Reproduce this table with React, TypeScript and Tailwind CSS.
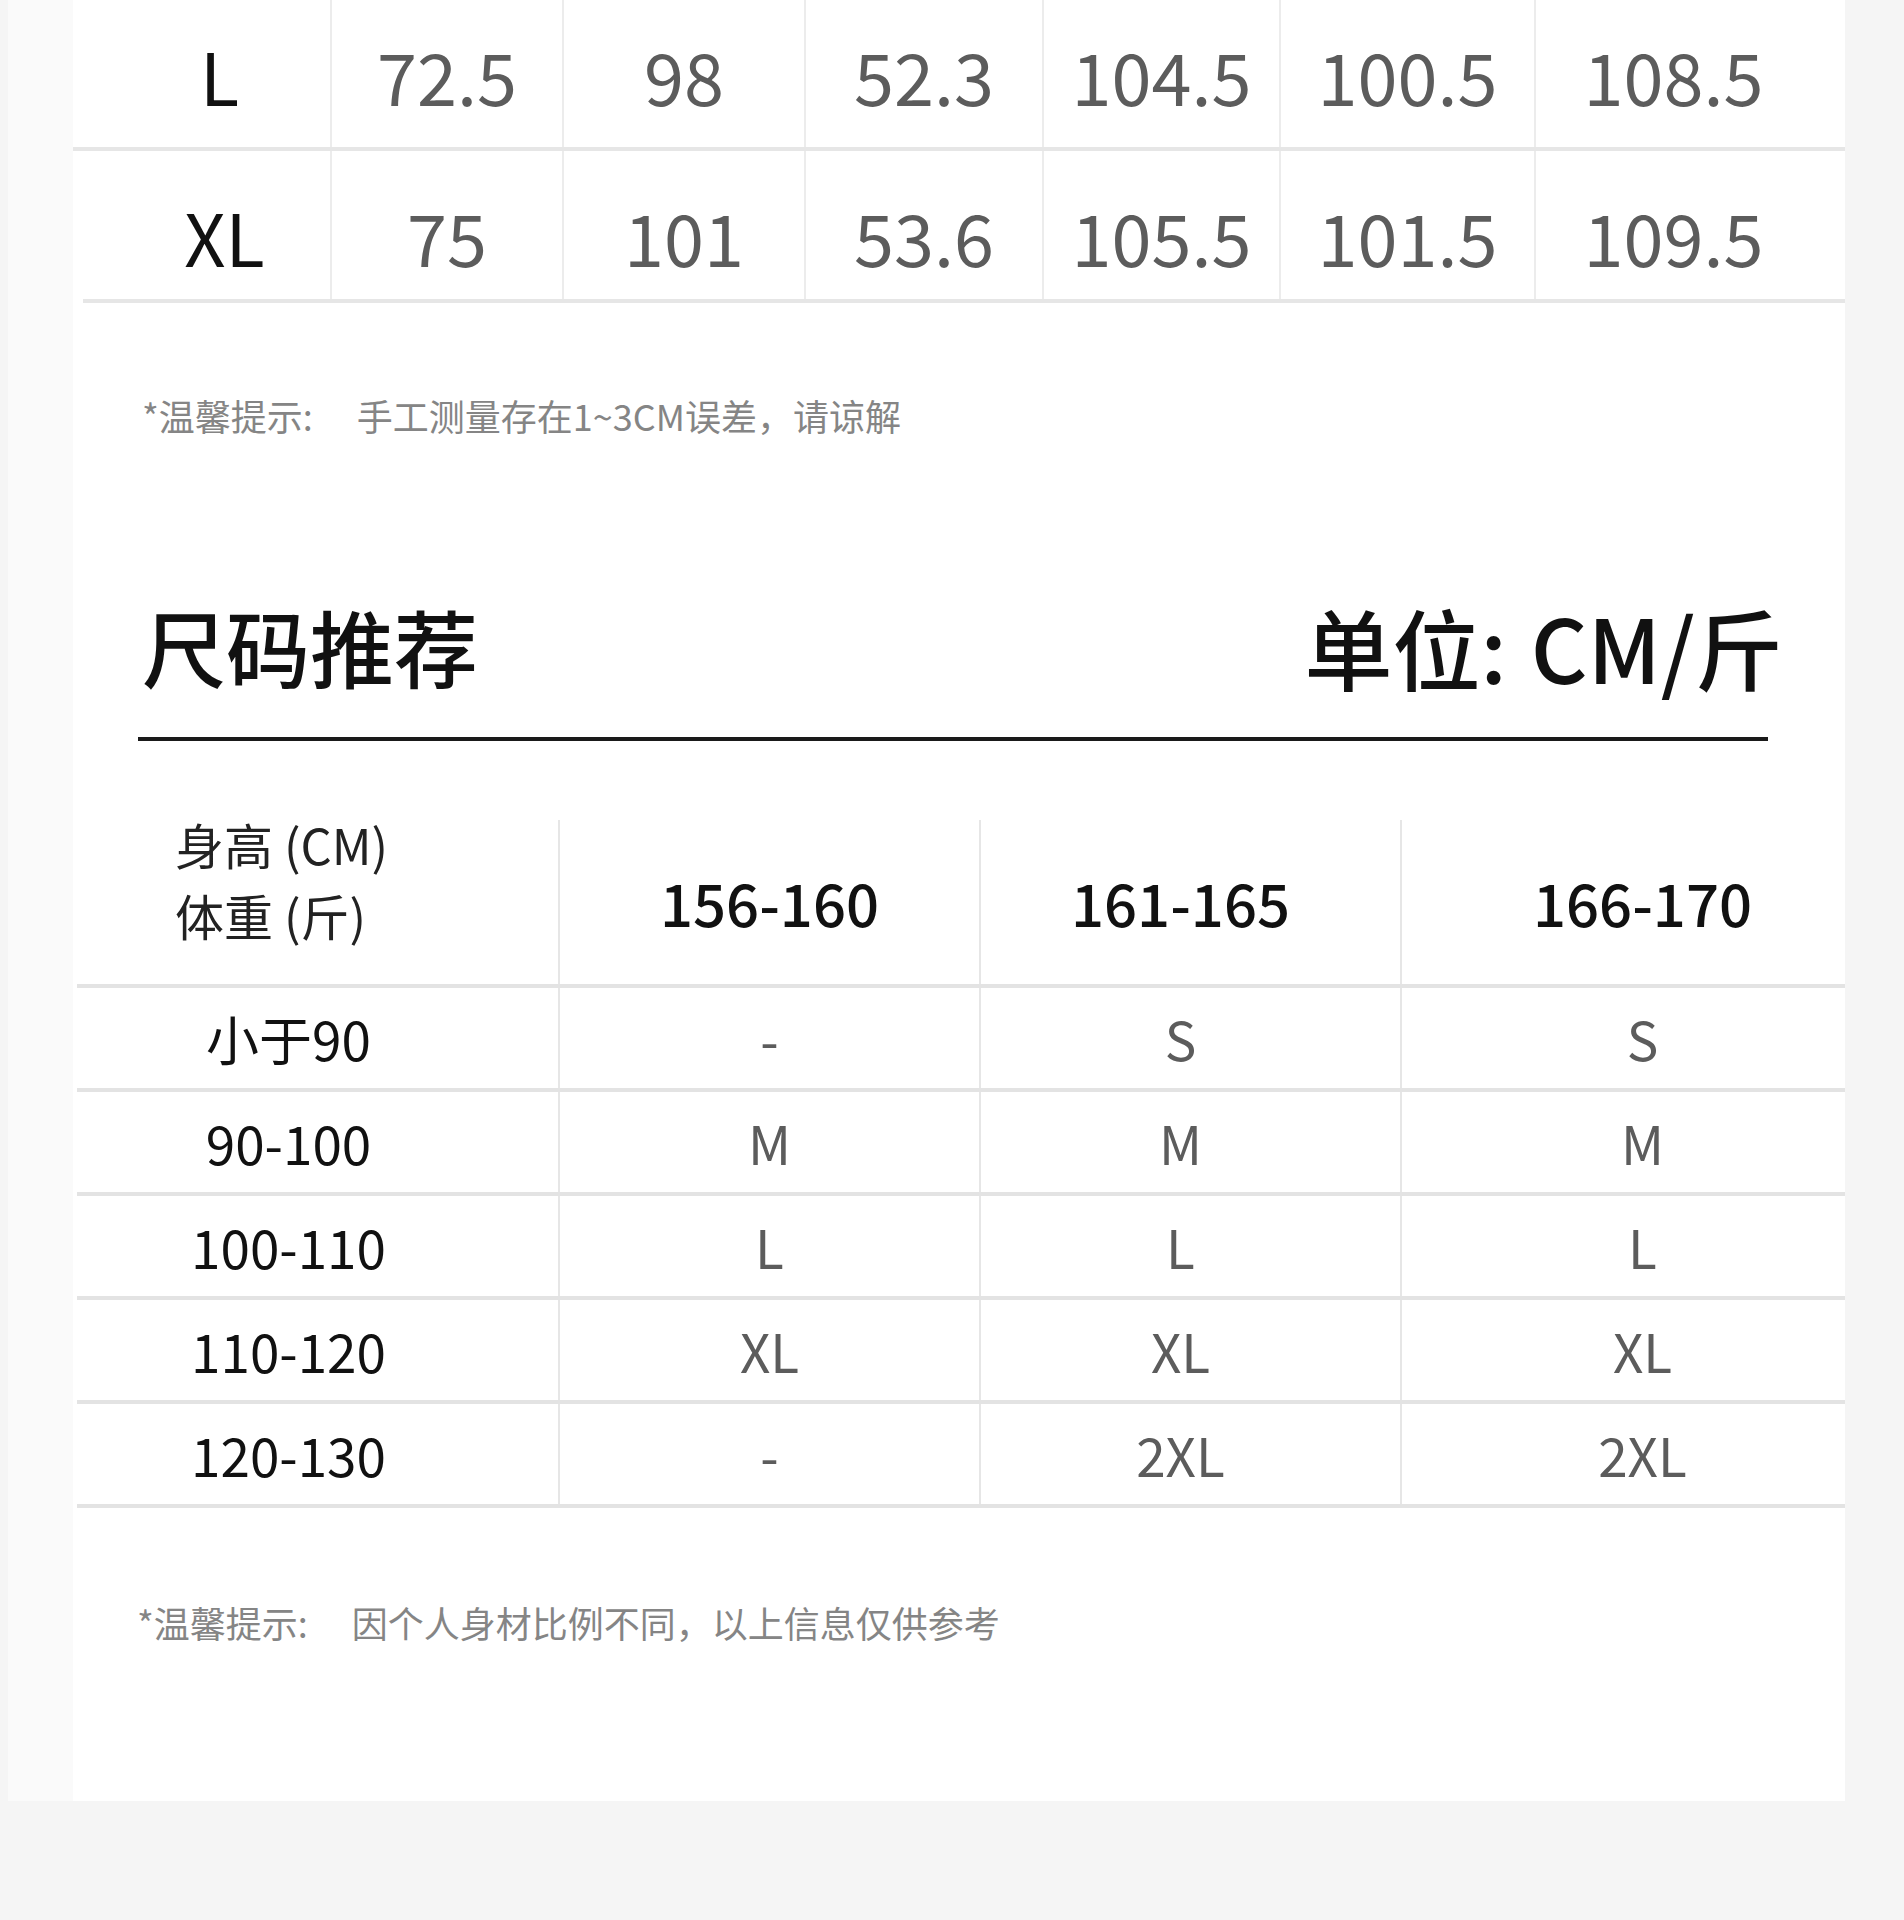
import React from "react";

const topWidths = ["w-[259px]", "w-[232px]", "w-[242px]", "w-[238px]", "w-[237px]", "w-[255px]", "w-[309px]"];

const topRows = [
  { size: "L", values: ["72.5", "98", "52.3", "104.5", "100.5", "108.5"], h: "h-[151px]", pt: "pt-[2px]" },
  { size: "XL", values: ["75", "101", "53.6", "105.5", "101.5", "109.5"], h: "h-[152px]", pt: "pt-[22px]" },
];

const recRows = [
  { weight: "小于90", sizes: ["-", "S", "S"] },
  { weight: "90-100", sizes: ["M", "M", "M"] },
  { weight: "100-110", sizes: ["L", "L", "L"] },
  { weight: "110-120", sizes: ["XL", "XL", "XL"] },
  { weight: "120-130", sizes: ["-", "2XL", "2XL"] },
];

const Tip = ({ text }: { text: string }) => (
  <p className="text-[36px] leading-[44px] text-[#858585] whitespace-nowrap">
    <span>*温馨提示:</span>
    <span className="ml-[44px]">{text}</span>
  </p>
);

const App = () => {
  return (
    <div className="min-h-[1920px] w-[1904px] bg-[#f5f5f5] pl-[8px] font-['Noto_Sans_CJK_SC',sans-serif]">
      <div className="w-[1837px] bg-[#fafafa] pl-[65px]">
        <div className="w-[1772px] h-[1801px] bg-white overflow-hidden">
          {/* 尺码表 (上半部分) */}
          <div>
            {topRows.map((row, i) => (
              <div
                key={row.size}
                className={`flex ${row.h} border-b-4 border-[#e6e6e6] ${i === 1 ? "ml-[10px]" : ""}`}
              >
                {[row.size, ...row.values].map((v, j) => (
                  <div
                    key={j}
                    className={`${j === 0 && i === 1 ? "w-[249px]" : topWidths[j]} ${row.pt} flex items-center justify-center text-[72px] leading-none ${
                      j < 6 ? "border-r-2 border-[#ececec]" : ""
                    } ${j === 0 ? "text-[#111] pl-[36px]" : "text-[#5c5c5c]"} ${j === 6 ? "pr-[34px]" : ""}`}
                  >
                    {v}
                  </div>
                ))}
              </div>
            ))}
          </div>

          <div className="mt-[90px] pl-[69px]">
            <Tip text="手工测量存在1~3CM误差，请谅解" />
          </div>

          {/* 尺码推荐 */}
          <div className="mt-[165px] flex items-center justify-between pl-[69px] pr-[62px] text-[#111]">
            <h2 className="text-[84px] leading-none font-medium">尺码推荐</h2>
            <span className="text-[88px] leading-none font-medium">
              单位:<span className="ml-[24px]">CM/斤</span>
            </span>
          </div>
          <div className="mt-[47px] ml-[65px] w-[1630px] h-[4px] bg-[#1a1a1a]" />

          <div className="mt-[79px] ml-[4px]">
            <div className="flex h-[168px] border-b-4 border-[#e3e3e3]">
              <div className="w-[483px] border-r-2 border-[#e6e6e6] pl-[98px] pb-[46px] flex flex-col justify-center text-[49px] leading-[71px] text-[#222] whitespace-nowrap">
                <span>身高 (CM)</span>
                <span>体重 (斤)</span>
              </div>
              <div className="w-[421px] border-r-2 border-[#e6e6e6] flex items-center justify-center text-[58px] font-medium text-[#111]">
                156-160
              </div>
              <div className="w-[421px] border-r-2 border-[#e6e6e6] pr-[20px] flex items-center justify-center text-[58px] font-medium text-[#111]">
                161-165
              </div>
              <div className="w-[443px] pl-[38px] flex items-center justify-center text-[58px] font-medium text-[#111]">
                166-170
              </div>
            </div>
            {recRows.map((row) => (
              <div key={row.weight} className="flex h-[104px] border-b-4 border-[#e3e3e3] text-[53px] leading-none">
                <div className="w-[483px] border-r-2 border-[#e6e6e6] pr-[58px] flex items-center justify-center text-[#111]">
                  {row.weight}
                </div>
                <div className="w-[421px] border-r-2 border-[#e6e6e6] flex items-center justify-center text-[#5c5c5c]">
                  {row.sizes[0]}
                </div>
                <div className="w-[421px] border-r-2 border-[#e6e6e6] pr-[20px] flex items-center justify-center text-[#5c5c5c]">
                  {row.sizes[1]}
                </div>
                <div className="w-[443px] pl-[38px] flex items-center justify-center text-[#5c5c5c]">
                  {row.sizes[2]}
                </div>
              </div>
            ))}
          </div>

          <div className="mt-[92px] pl-[64px]">
            <Tip text="因个人身材比例不同，以上信息仅供参考" />
          </div>
        </div>
      </div>
    </div>
  );
};

export default App;
